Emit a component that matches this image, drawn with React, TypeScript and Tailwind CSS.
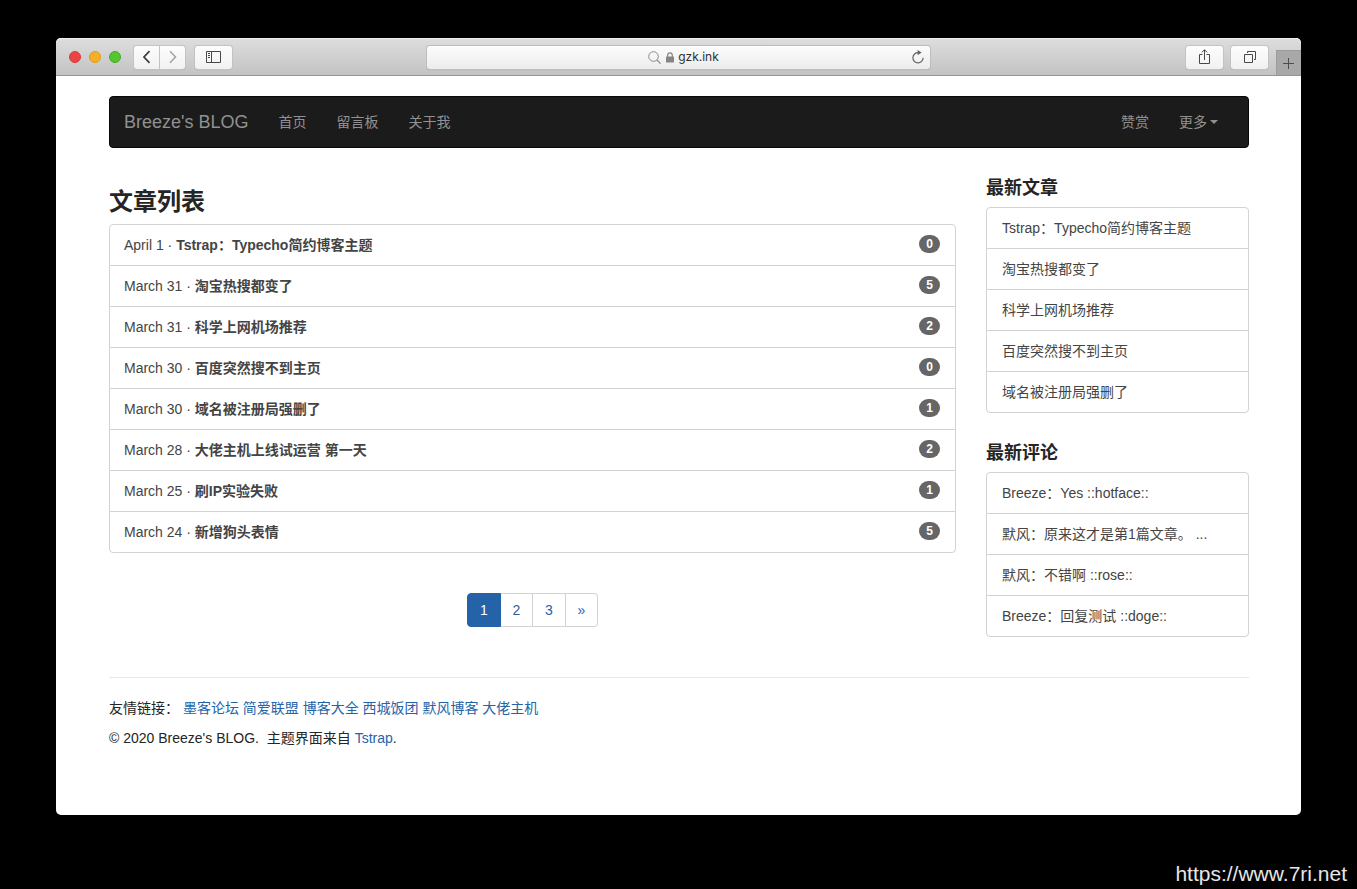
import type { ReactNode } from 'react'

interface Post {
    date: string
    title: string
    comments: number
}

const posts: Post[] = [
    { date: 'April 1', title: 'Tstrap：Typecho简约博客主题', comments: 0 },
    { date: 'March 31', title: '淘宝热搜都变了', comments: 5 },
    { date: 'March 31', title: '科学上网机场推荐', comments: 2 },
    { date: 'March 30', title: '百度突然搜不到主页', comments: 0 },
    { date: 'March 30', title: '域名被注册局强删了', comments: 1 },
    { date: 'March 28', title: '大佬主机上线试运营 第一天', comments: 2 },
    { date: 'March 25', title: '刷IP实验失败', comments: 1 },
    { date: 'March 24', title: '新增狗头表情', comments: 5 },
]

const latestPosts = posts.slice(0, 5).map(p => p.title)

const latestComments = [
    'Breeze：Yes ::hotface::',
    '默风：原来这才是第1篇文章。 ...',
    '默风：不错啊 ::rose::',
    'Breeze：回复测试 ::doge::',
]

const friendLinks = ['墨客论坛', '简爱联盟', '博客大全', '西城饭团', '默风博客', '大佬主机']

const ToolButton = ({ label, className, children }: { label: string, className: string, children: ReactNode }) => (
    <button
        aria-label={label}
        className={`flex h-[23px] items-center justify-center bg-linear-to-b from-[#fdfdfd] to-[#f1f1f1] shadow-[0_0_0_1px_#c3c3c3,0_1px_1px_#8f8f8f] ${className}`}
    >
        {children}
    </button>
)

function BrowserBar() {
    return (
        <div className="grid h-[38px] grid-cols-[1fr_minmax(0,503px)_1fr] items-center rounded-t-[5px] border-t border-b border-t-[#efefef] border-b-[#959595] bg-linear-to-b from-[#dddddd] to-[#c3c3c3]">
            <div className="flex items-center pl-[13px]">
                <div className="flex gap-2">
                    <span className="size-3 rounded-full border border-[#d93b3b] bg-[#ea4444]" />
                    <span className="size-3 rounded-full border border-[#dd9a21] bg-[#f6b026]" />
                    <span className="size-3 rounded-full border border-[#43ab27] bg-[#55c531]" />
                </div>
                <div className="ml-[13px] flex gap-px">
                    <ToolButton label="Back" className="w-[25px] rounded-l-[3px]">
                        <svg width="8" height="14" viewBox="0 0 8 14" fill="none" stroke="#3c3c3c" strokeWidth="1.7">
                            <path d="M6.5 1.2 1 7 6.5 12.8" />
                        </svg>
                    </ToolButton>
                    <ToolButton label="Forward" className="w-[25px] rounded-r-[3px]">
                        <svg width="8" height="14" viewBox="0 0 8 14" fill="none" stroke="#a3a3a3" strokeWidth="1.5">
                            <path d="M1 1.2 6.5 7 1 12.8" />
                        </svg>
                    </ToolButton>
                </div>
                <ToolButton label="Sidebar" className="ml-[10px] w-[37px] rounded-[3px]">
                    <svg width="15" height="12" viewBox="0 0 15 12" fill="none" stroke="#484848">
                        <path d="M.5 .5h14v11H.5zM5.5 .5v11M2 2.5h2M2 4.5h2M2 6.5h2" />
                    </svg>
                </ToolButton>
            </div>

            <div className="flex h-[23px] items-center rounded-[3px] bg-linear-to-b from-[#fcfcfc] to-[#ececec] pr-[6px] shadow-[0_0_0_1px_#bdbdbd,0_1px_1px_#8f8f8f]">
                <label className="flex flex-1 items-center justify-center pl-7">
                    <svg width="13" height="13" viewBox="0 0 13 13" fill="none" stroke="#8a8a8a">
                        <circle cx="5.5" cy="5.5" r="4.8" />
                        <path d="m9 9 3.6 3.6" strokeWidth="1.2" />
                    </svg>
                    <svg className="ml-[5px]" width="8" height="11" viewBox="0 0 8 11">
                        <path d="M1.7 5.5V3.2a2.3 2.3 0 0 1 4.6 0v2.3" fill="none" stroke="#858585" strokeWidth="1.2" />
                        <rect y="4.5" width="8" height="6" rx=".6" fill="#858585" />
                    </svg>
                    <input
                        aria-label="Address"
                        defaultValue="gzk.ink"
                        className="ml-1 field-sizing-content bg-transparent font-['Inter','Roboto',sans-serif] text-[12px] leading-4 text-[#303030] outline-none"
                    />
                </label>
                <button aria-label="Reload">
                    <svg width="12" height="14" viewBox="0 0 12 14" fill="none" stroke="#626262" strokeWidth="1.2">
                        <path d="M6.3 2.7A5.1 5.1 0 1 0 11.1 7.8" />
                        <path d="M5.6 0v5.2L9.6 2.6z" fill="#626262" stroke="none" />
                    </svg>
                </button>
            </div>

            <div className="flex items-center justify-end self-stretch">
                <ToolButton label="Share" className="w-[37px] rounded-[3px]">
                    <svg width="11" height="17" viewBox="0 0 11 17" fill="none" stroke="#484848">
                        <path d="M3.5 5.5h-3v9h10v-9h-3M5.5 11V1M2.8 3.4l2.7-2.7 2.7 2.7" />
                    </svg>
                </ToolButton>
                <ToolButton label="Show tabs" className="ml-2 w-[37px] rounded-[3px]">
                    <svg width="12" height="12" viewBox="0 0 12 12" fill="none" stroke="#484848">
                        <path d="M.5 3.5h8v8h-8zM3.5 2V.5h8v8H10" />
                    </svg>
                </ToolButton>
                <button aria-label="New tab" className="ml-2 flex h-[25px] w-[25px] items-center justify-center self-end border-t border-l border-[#9b9b9b] bg-[#a8a8a8]">
                    <svg width="12" height="11" viewBox="0 0 12 11" stroke="#4c4c4c">
                        <path d="M5.5 0v11M0 5.5h11" />
                    </svg>
                </button>
            </div>
        </div>
    )
}

const NavLink = ({ children }: { children: ReactNode }) => (
    <a href="#" className="px-[15px] py-[15px] hover:text-white">{children}</a>
)

function Navbar() {
    return (
        <nav className="flex items-center rounded border border-[#080808] bg-[#1b1b1b] text-[#919191]">
            <a href="#" className="pr-[15px] pl-[14px] text-[18px]">Breeze's BLOG</a>
            <NavLink>首页</NavLink>
            <NavLink>留言板</NavLink>
            <NavLink>关于我</NavLink>
            <div className="mr-[15px] ml-auto flex">
                <NavLink>赞赏</NavLink>
                <button className="flex items-center gap-[3px] px-[15px]">
                    更多
                    <span className="border-x-4 border-t-4 border-x-transparent border-t-[#919191]" />
                </button>
            </div>
        </nav>
    )
}

function SideList({ title, items }: { title: string, items: string[] }) {
    return (
        <section>
            <h4 className="mb-[9px] text-[18px] font-bold">{title}</h4>
            <ul className="divide-y divide-[#d3d3d3] rounded border border-[#d3d3d3] text-[#444444]">
                {items.map(item => (
                    <li key={item}>
                        <a href="#" className="block truncate px-[15px] py-[10px]">{item}</a>
                    </li>
                ))}
            </ul>
        </section>
    )
}

export default function App() {
    return (
        <div
            lang="zh-CN"
            className="flex min-h-screen flex-col bg-black font-['Liberation_Sans','Noto_Sans_CJK_SC',sans-serif] text-[14px] leading-5 text-[#252525]"
        >
            <div className="mx-14 mt-[38px] flex-1 rounded-[5px] bg-white">
                <BrowserBar />

                <div className="pt-5 pr-[52px] pb-10 pl-[53px]">
                    <Navbar />

                    <div className="mt-5 flex gap-[30px]">
                        <main className="flex-1 pt-[21px]">
                            <h3 className="mb-[9px] text-[24px] leading-[26px] font-bold">文章列表</h3>
                            <ul className="divide-y divide-[#d3d3d3] rounded border border-[#d3d3d3] text-[#444444]">
                                {posts.map(post => (
                                    <li key={post.title}>
                                        <a href="#" className="flex items-start justify-between pt-[10px] pr-[15px] pb-[10px] pl-[14px]">
                                            <span>{post.date} · <b>{post.title}</b></span>
                                            <span className="flex h-[18px] items-center rounded-full bg-[#666666] px-[7px] text-[12px] font-bold text-white">
                                                {post.comments}
                                            </span>
                                        </a>
                                    </li>
                                ))}
                            </ul>

                            <div className="mt-10 flex justify-center">
                                <div className="flex h-[34px] text-center leading-8 text-[#2563a8]">
                                    <a href="#" aria-current="page" className="w-[34px] rounded-l border border-[#2563a8] bg-[#2563a8] text-white">1</a>
                                    <a href="#" className="w-8 border-y border-r border-[#d3d3d3]">2</a>
                                    <a href="#" className="w-[33px] border-y border-r border-[#d3d3d3]">3</a>
                                    <a href="#" className="w-8 rounded-r border-y border-r border-[#d3d3d3]">»</a>
                                </div>
                            </div>
                        </main>

                        <aside className="flex w-[263px] flex-col gap-[30px] pt-[10px]">
                            <SideList title="最新文章" items={latestPosts} />
                            <SideList title="最新评论" items={latestComments} />
                        </aside>
                    </div>

                    <footer className="mt-10 border-t border-[#e8e8e8] pt-5">
                        <p className="mb-[10px]">
                            友情链接：&nbsp;
                            {friendLinks.map(name => (
                                <span key={name}><a href="#" className="text-[#2563a8]">{name}</a> </span>
                            ))}
                        </p>
                        <p>© 2020 Breeze's BLOG.&nbsp; 主题界面来自 <a href="#" className="text-[#2563a8]">Tstrap</a>.</p>
                    </footer>
                </div>
            </div>

            <div className="flex h-[74px] items-end justify-end pr-[10px] pb-[3px] text-[21px] leading-6 text-[#e6e6e6]">https://www.7ri.net</div>
        </div>
    )
}
